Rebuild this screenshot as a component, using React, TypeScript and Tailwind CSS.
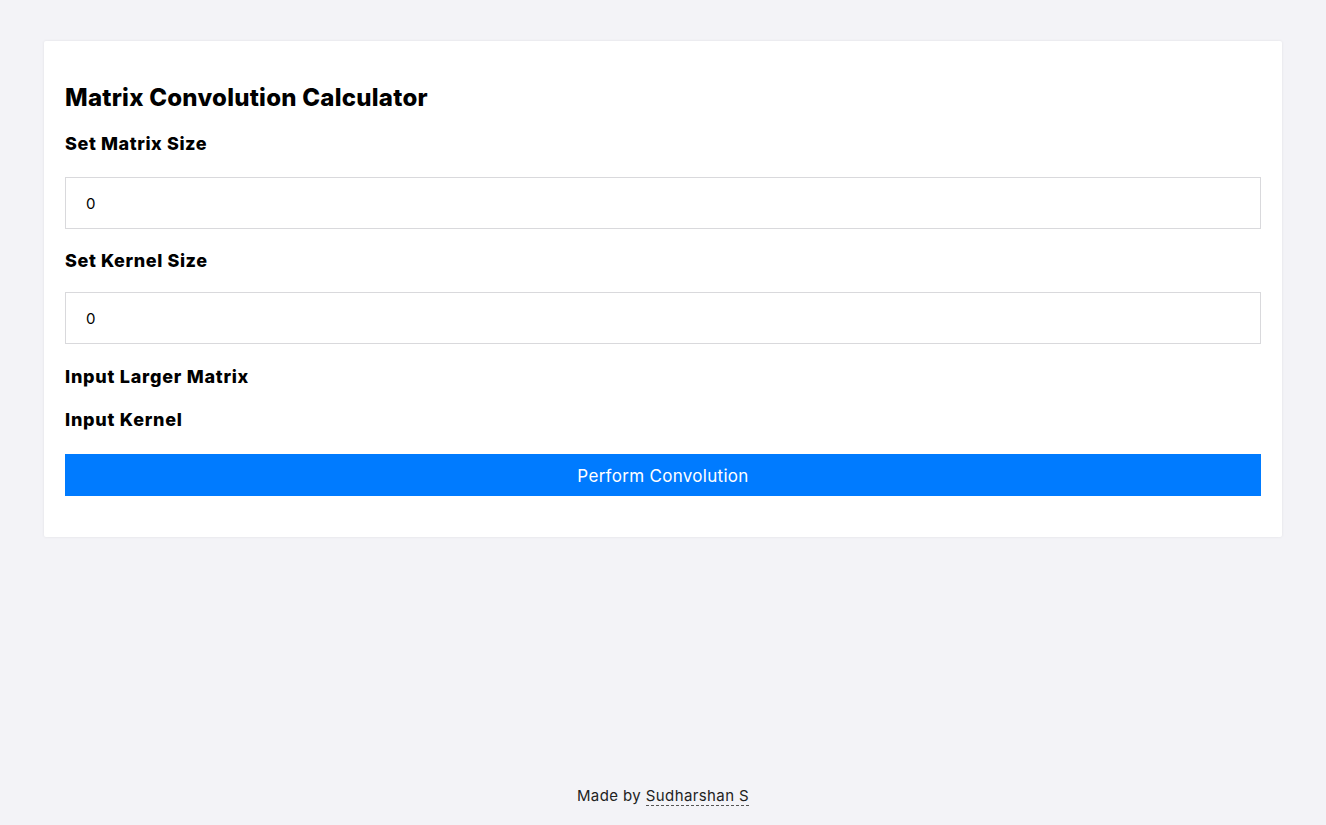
import React from "react";

export default function App() {
  const font = { fontFamily: "Inter, 'Noto Sans', sans-serif" };
  return (
    <div
      className="min-h-[825px] w-full bg-[#f3f3f7] flex flex-col text-black"
      style={font}
    >
      <div className="px-[44px] pt-[41px]">
        <div className="bg-white rounded-[2px] shadow-[0_0_3px_rgba(0,0,0,0.08)] px-[21px] pt-[42px] pb-[41px] flex flex-col">
          <h2 className="text-[24px] leading-[30px] font-extrabold tracking-[0.25px]">
            Matrix Convolution Calculator
          </h2>
          <label className="mt-[17px] text-[18px] leading-[28px] font-extrabold tracking-[0.6px]">
            Set Matrix Size
          </label>
          <input
            type="number"
            defaultValue={0}
            className="mt-[19px] h-[52px] border border-[#d9d9dc] px-[20px] text-[15px] outline-none"
          />
          <label className="mt-[18px] text-[18px] leading-[28px] font-extrabold tracking-[0.6px]">
            Set Kernel Size
          </label>
          <input
            type="number"
            defaultValue={0}
            className="mt-[17px] h-[52px] border border-[#d9d9dc] px-[20px] text-[15px] outline-none"
          />
          <div className="mt-[19px] text-[18px] leading-[28px] font-extrabold tracking-[0.75px]">
            Input Larger Matrix
          </div>
          <div className="mt-[15px] text-[18px] leading-[28px] font-extrabold tracking-[0.75px]">
            Input Kernel
          </div>
          <button className="mt-[20px] h-[42px] bg-[#007bff] text-white text-[17px] tracking-[0.3px] pt-[3px]">
            Perform Convolution
          </button>
        </div>
      </div>
      <div className="flex-1" />
      <div className="pb-[19px] text-center text-[15px] leading-[20px] tracking-[0.4px] text-[#222]">
        Made by{" "}
        <a className="border-b border-dashed border-[#555]" href="#">
          Sudharshan S
        </a>
      </div>
    </div>
  );
}
